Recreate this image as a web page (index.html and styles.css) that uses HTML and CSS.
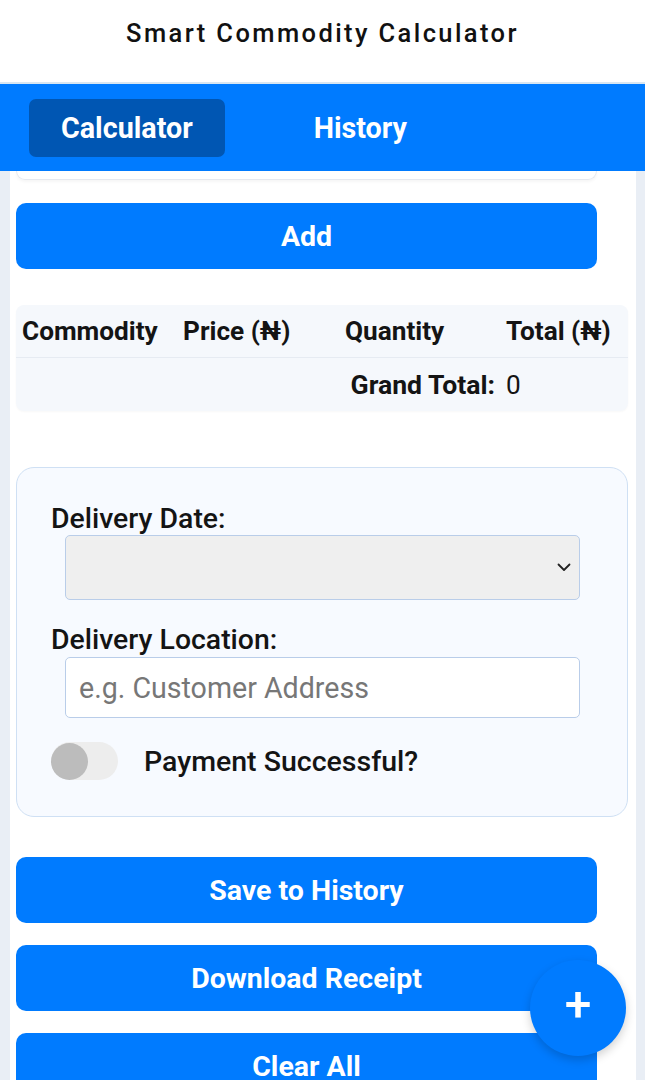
FILE: index.html
```html
<!DOCTYPE html>
<html lang="en">
<head>
<meta charset="utf-8">
<title>Smart Commodity Calculator</title>
<link rel="stylesheet" href="styles.css">
</head>
<body>
<header class="app-header">
  <h1 class="app-title">Smart Commodity Calculator</h1>
</header>
<nav class="tabs">
  <button class="tab tab-active">Calculator</button>
  <button class="tab">History</button>
</nav>
<main class="content">
  <div class="card-tail"></div>
  <button class="btn btn-add">Add</button>

  <table class="items">
    <thead>
      <tr>
        <th class="col-commodity">Commodity</th>
        <th class="col-price">Price (₦)</th>
        <th class="col-qty">Quantity</th>
        <th class="col-total">Total (₦)</th>
      </tr>
    </thead>
    <tbody>
      <tr>
        <td colspan="3" class="grand-label">Grand Total:</td>
        <td class="grand-value">0</td>
      </tr>
    </tbody>
  </table>

  <section class="delivery">
    <label class="field-label">Delivery Date:</label>
    <div class="select-box">
      <svg class="chevron" width="14" height="9" viewBox="0 0 14 9"><path d="M1.5 1.5 L7 7 L12.5 1.5" fill="none" stroke="#222" stroke-width="1.8" stroke-linecap="round" stroke-linejoin="round"/></svg>
    </div>
    <label class="field-label field-label-second">Delivery Location:</label>
    <input class="text-input" type="text" placeholder="e.g. Customer Address">
    <div class="toggle-row">
      <span class="toggle"><span class="knob"></span></span>
      <span class="toggle-label">Payment Successful?</span>
    </div>
  </section>

  <button class="btn btn-save">Save to History</button>
  <button class="btn">Download Receipt</button>
  <button class="btn">Clear All</button>
</main>
<button class="fab">+</button>
</body>
</html>
```

FILE: styles.css
```css
* { box-sizing: border-box; }

html, body {
  margin: 0;
  padding: 0;
}

body {
  background: #e9eef5;
  font-family: Roboto, "Noto Sans", "Liberation Sans", sans-serif;
  color: #141414;
  height: 1080px;
  overflow: hidden;
}

.app-header {
  height: 84px;
  background: #ffffff;
  border-bottom: 2px solid #d8e6f2;
  display: flex;
  align-items: center;
  justify-content: center;
  padding-bottom: 16px;
}

.app-title {
  margin: 0;
  font-size: 25.5px;
  font-weight: 500;
  letter-spacing: 2.4px;
  color: #111;
}

.tabs {
  height: 87px;
  background: #007bff;
  display: flex;
  align-items: center;
  gap: 57px;
  padding: 0 29px;
}

.tab {
  height: 58px;
  padding: 0 32px;
  border: none;
  border-radius: 7px;
  background: transparent;
  color: #ffffff;
  font-family: Roboto, "Noto Sans", sans-serif;
  font-size: 28.7px;
  font-weight: 700;
}

.tab-active {
  background: #0056b3;
}

.content {
  margin: 0 9px 0 10px;
  background: #ffffff;
  padding: 0 8px 40px 6px;
  display: flex;
  flex-direction: column;
  align-items: flex-start;
}

.card-tail {
  width: 581px;
  height: 9px;
  border: 1px solid #e6e9ef;
  border-top: none;
  border-radius: 0 0 12px 12px;
  box-shadow: 0 2px 3px rgba(0, 0, 0, 0.04);
}

.btn {
  width: 581px;
  height: 66px;
  border: none;
  border-radius: 10px;
  background: #007bff;
  color: #ffffff;
  font-family: Roboto, "Noto Sans", sans-serif;
  font-size: 28.5px;
  font-weight: 700;
  margin-top: 22px;
  flex-shrink: 0;
}

.btn-add {
  margin-top: 23px;
}

.btn-save {
  margin-top: 40px;
}

.items {
  margin-top: 36px;
  width: 612px;
  border-collapse: separate;
  border-spacing: 0;
  background: #f5f8fc;
  border-radius: 8px;
  font-size: 26.2px;
  box-shadow: 0 1px 2px rgba(0, 0, 0, 0.03);
}

.items th {
  text-align: left;
  font-weight: 700;
  height: 53px;
  padding: 0 0 0 6px;
  border-bottom: 1px solid #e6ebf2;
  white-space: nowrap;
}

.col-commodity { width: 161px; }
.col-price { width: 162px; }
.col-qty { width: 161px; }
.col-total { width: 128px; }

.items td {
  height: 53px;
  padding: 0;
}

.grand-label {
  text-align: right;
  font-weight: 700;
  font-size: 26.6px;
  padding-right: 5px !important;
}

.grand-value {
  padding-left: 6px !important;
  font-weight: 400;
}

.delivery {
  margin-top: 56px;
  width: 612px;
  border: 1.5px solid #cfe0f4;
  border-radius: 18px;
  background: #f7faff;
  padding: 34px 34px 36px 34px;
  display: flex;
  flex-direction: column;
  align-items: flex-start;
}

.field-label {
  font-size: 28.4px;
  font-weight: 500;
  line-height: 33px;
  color: #141414;
}

.field-label-second {
  margin-top: 23px;
}

.select-box {
  margin-left: 14px;
  width: 515px;
  height: 65px;
  background: #efefef;
  border: 1.5px solid #b9cde9;
  border-radius: 5px;
  display: flex;
  align-items: center;
  justify-content: flex-end;
  padding-right: 8px;
}

.text-input {
  margin-left: 14px;
  margin-top: 1px;
  width: 515px;
  height: 61px;
  background: #ffffff;
  border: 1.5px solid #b9cde9;
  border-radius: 5px;
  padding: 0 13px;
  font-family: Roboto, "Noto Sans", sans-serif;
  font-size: 28.6px;
  color: #222;
}

.text-input::placeholder {
  color: #777777;
}

.toggle-row {
  margin-top: 24px;
  display: flex;
  align-items: center;
}

.toggle {
  width: 67px;
  height: 38px;
  border-radius: 19px;
  background: #ededed;
  display: flex;
  align-items: center;
}

.knob {
  width: 37px;
  height: 37px;
  border-radius: 50%;
  background: #bcbcbc;
}

.toggle-label {
  margin-left: 26px;
  font-size: 28.5px;
  font-weight: 500;
  color: #141414;
}

.fab {
  position: fixed;
  right: 19px;
  bottom: 24px;
  width: 96px;
  height: 96px;
  border-radius: 50%;
  border: none;
  background: #007bff;
  color: #ffffff;
  font-family: Roboto, "Noto Sans", sans-serif;
  font-size: 48px;
  font-weight: 500;
  line-height: 1;
  padding: 0 0 6px 0;
  box-shadow: 0 4px 10px rgba(0, 0, 0, 0.18);
}
```
